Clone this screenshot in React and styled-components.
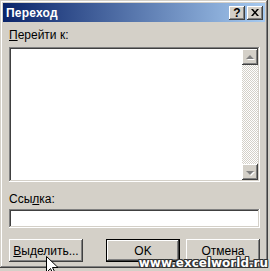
import React from "react";
import styled, { createGlobalStyle } from "styled-components";

const GlobalStyle = createGlobalStyle`
  html, body {
    margin: 0;
    padding: 0;
    background: #d4d0c8;
  }
  body {
    font-family: "Liberation Sans", Arial, sans-serif;
    font-size: 11px;
    color: #000;
  }
`;

const raised = `
  box-shadow: inset -1px -1px #404040, inset 1px 1px #ffffff,
    inset -2px -2px #808080, inset 2px 2px #d4d0c8;
`;

const sunken = `
  box-shadow: inset -1px -1px #ffffff, inset 1px 1px #808080,
    inset -2px -2px #d4d0c8, inset 2px 2px #404040;
`;

const Stage = styled.div`
  position: relative;
  width: 270px;
  height: 271px;
  overflow: hidden;
`;

const Window = styled.div`
  width: 268px;
  height: 268px;
  box-sizing: border-box;
  padding: 3px;
  display: flex;
  flex-direction: column;
  background: #d4d0c8;
  box-shadow: inset -1px -1px #404040, inset 1px 1px #d4d0c8,
    inset -2px -2px #808080, inset 2px 2px #ffffff;
`;

const TitleBar = styled.div`
  height: 19px;
  display: flex;
  align-items: center;
  padding: 0 2px 0 3px;
  background: linear-gradient(to right, #0a246a, #a6caf0);
`;

const Title = styled.span`
  flex: 1;
  color: #fff;
  font-weight: bold;
  font-size: 12px;
  letter-spacing: 0.2px;
`;

const CapButton = styled.div`
  width: 16px;
  height: 14px;
  margin-left: ${(p) => (p.$gap ? "2px" : "0")};
  display: flex;
  align-items: center;
  justify-content: center;
  background: #d4d0c8;
  font-weight: bold;
  font-size: 12px;
  line-height: 1;
  ${raised}
`;

const Body = styled.div`
  flex: 1;
  display: flex;
  flex-direction: column;
  padding: 6px 5px 0 6px;
`;

const Label = styled.div`
  font-size: 12px;
  height: 14px;
  line-height: 14px;
  margin-top: ${(p) => p.$mt || "0"};
  margin-bottom: ${(p) => p.$mb || "5px"};
  u {
    text-decoration: underline;
    text-underline-offset: 1px;
  }
`;

const ListBox = styled.div`
  height: 135px;
  box-sizing: border-box;
  padding: 2px;
  display: flex;
  background: #fff;
  ${sunken}
`;

const ListArea = styled.div`
  flex: 1;
`;

const ScrollBar = styled.div`
  width: 16px;
  display: flex;
  flex-direction: column;
  justify-content: space-between;
  background-color: #fff;
  background-image: conic-gradient(
    #d4d0c8 25%,
    #ffffff 0 50%,
    #d4d0c8 0 75%,
    #ffffff 0
  );
  background-size: 2px 2px;
`;

const ArrowBtn = styled.div`
  width: 16px;
  height: 16px;
  display: flex;
  align-items: center;
  justify-content: center;
  background: #d4d0c8;
  ${raised}
`;

const Arrow = styled.div`
  width: 0;
  height: 0;
  border-left: 4px solid transparent;
  border-right: 4px solid transparent;
  ${(p) =>
    p.$down
      ? "border-top: 4px solid #808080; margin-top: 1px;"
      : "border-bottom: 4px solid #808080; margin-bottom: 1px;"}
  filter: drop-shadow(1px 1px 0 #ffffff);
`;

const Input = styled.div`
  height: 19px;
  box-sizing: border-box;
  background: #fff;
  ${sunken}
`;

const ButtonRow = styled.div`
  display: flex;
  margin-top: 11px;
`;

const Button = styled.div`
  width: ${(p) => p.$w || "75px"};
  height: 23px;
  box-sizing: border-box;
  margin-left: ${(p) => p.$ml || "0"};
  display: flex;
  align-items: center;
  justify-content: center;
  font-size: 12px;
  background: #d4d0c8;
  ${(p) =>
    p.$default
      ? `border: 1px solid #000;
         box-shadow: inset -1px -1px #404040, inset 1px 1px #ffffff,
           inset -2px -2px #808080, inset 2px 2px #d4d0c8;`
      : raised}
  u {
    text-decoration: underline;
    text-underline-offset: 1px;
  }
`;

const Watermark = styled.div`
  position: absolute;
  right: 2px;
  bottom: 1px;
  font-family: "DejaVu Sans", Verdana, sans-serif;
  font-weight: bold;
  font-size: 12px;
  color: #fff;
  text-shadow: 1px 0 #333, -1px 0 #333, 0 1px #333, 0 -1px #333,
    1px 1px #333, -1px -1px #333, 1px -1px #333, -1px 1px #333;
`;

const Cursor = styled.svg`
  position: absolute;
  left: 46px;
  top: 256px;
`;

export default function App() {
  return (
    <>
      <GlobalStyle />
      <Stage>
        <Window>
          <TitleBar>
            <Title>Переход</Title>
            <CapButton>?</CapButton>
            <CapButton $gap>
              <svg width="8" height="7" viewBox="0 0 8 7">
                <path
                  d="M0 0h2l2 2.5L6 0h2L5 3.5 8 7H6L4 4.5 2 7H0l3-3.5z"
                  fill="#000"
                />
              </svg>
            </CapButton>
          </TitleBar>
          <Body>
            <Label>
              <u>П</u>ерейти к:
            </Label>
            <ListBox>
              <ListArea />
              <ScrollBar>
                <ArrowBtn>
                  <Arrow />
                </ArrowBtn>
                <ArrowBtn>
                  <Arrow $down />
                </ArrowBtn>
              </ScrollBar>
            </ListBox>
            <Label $mt="10px" $mb="3px">
              Ссы<u>л</u>ка:
            </Label>
            <Input />
            <ButtonRow>
              <Button>
                <u>В</u>ыделить...
              </Button>
              <Button $default $ml="23px">
                OK
              </Button>
              <Button $ml="6px">Отмена</Button>
            </ButtonRow>
          </Body>
        </Window>
        <Cursor width="12" height="19" viewBox="0 0 12 19">
          <path
            d="M0.5 0.5v16l4-4 3 6 2-1-3-6h5.5z"
            fill="#fff"
            stroke="#000"
            strokeWidth="1"
          />
        </Cursor>
        <Watermark>www.excelworld.ru</Watermark>
      </Stage>
    </>
  );
}
